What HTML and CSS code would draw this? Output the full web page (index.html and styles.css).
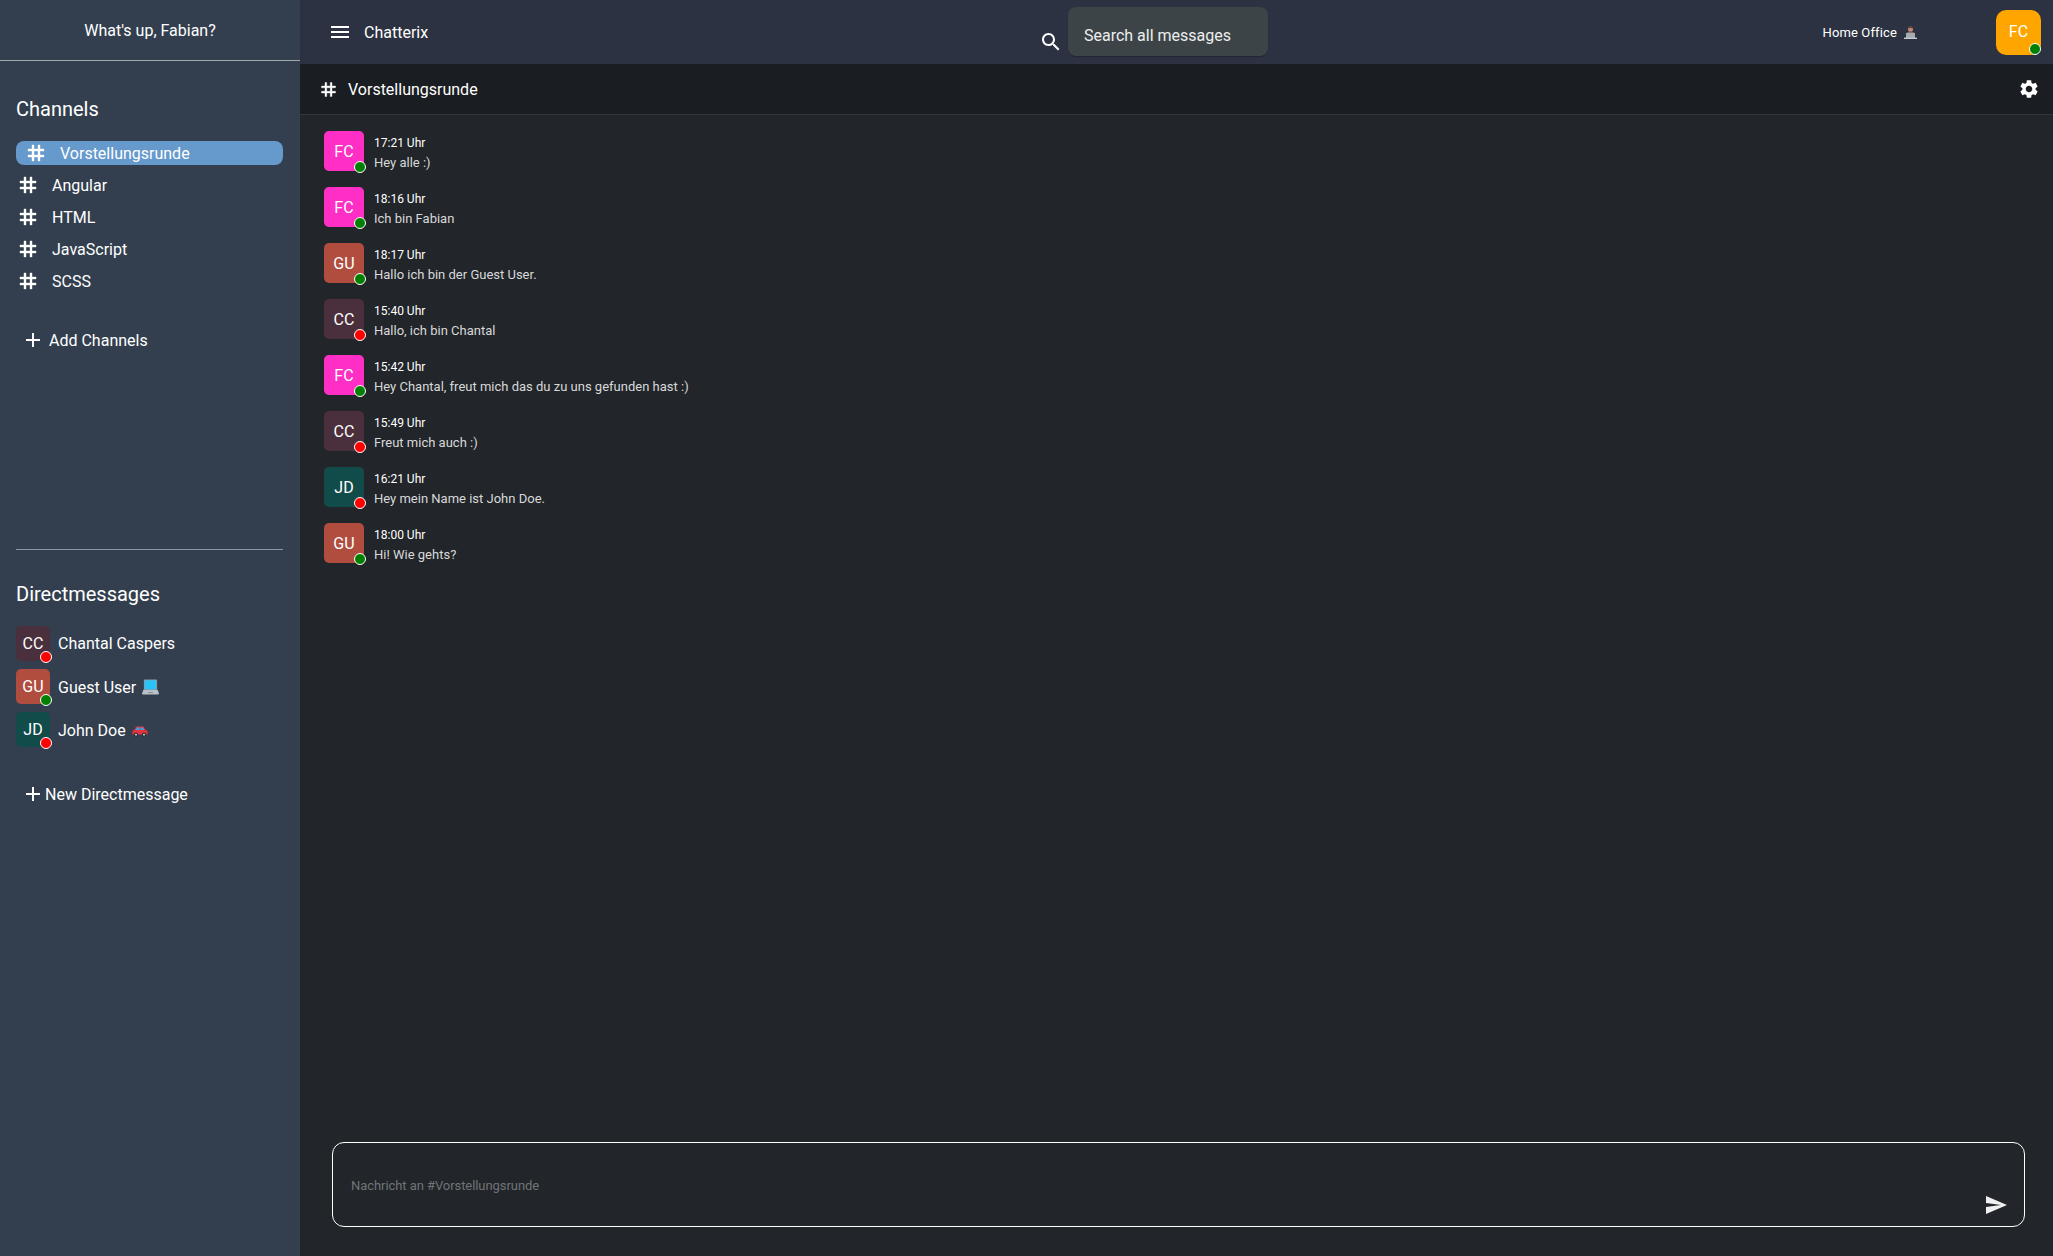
FILE: index.html
```html
<!DOCTYPE html>
<html lang="de">
<head>
<meta charset="utf-8">
<title>Chatterix</title>
<link rel="stylesheet" href="styles.css">
</head>
<body>
<svg class="defs" aria-hidden="true">
  <symbol id="i-tag" viewBox="0 0 24 24"><path d="M20 10V8h-4V4h-2v4h-4V4H8v4H4v2h4v4H4v2h4v4h2v-4h4v4h2v-4h4v-2h-4v-4h4zm-6 4h-4v-4h4v4z"/></symbol>
  <symbol id="i-add" viewBox="0 0 24 24"><path d="M19 13h-6v6h-2v-6H5v-2h6V5h2v6h6v2z"/></symbol>
  <symbol id="i-menu" viewBox="0 0 24 24"><path d="M3 18h18v-2H3v2zm0-5h18v-2H3v2zm0-7v2h18V6H3z"/></symbol>
  <symbol id="i-search" viewBox="0 0 24 24"><path d="M15.5 14h-.79l-.28-.27C15.41 12.59 16 11.11 16 9.5 16 5.91 13.09 3 9.5 3S3 5.91 3 9.5 5.91 16 9.5 16c1.61 0 3.09-.59 4.23-1.57l.27.28v.79l5 4.99L20.49 19l-4.99-5zm-6 0C7.01 14 5 11.99 5 9.5S7.01 5 9.5 5 14 7.01 14 9.5 11.99 14 9.5 14z"/></symbol>
  <symbol id="i-gear" viewBox="0 0 24 24"><path d="M19.14 12.94c.04-.3.06-.61.06-.94 0-.32-.02-.64-.07-.94l2.03-1.58c.18-.14.23-.41.12-.61l-1.92-3.32c-.12-.22-.37-.29-.59-.22l-2.39.96c-.5-.38-1.03-.7-1.62-.94l-.36-2.54c-.04-.24-.24-.41-.48-.41h-3.84c-.24 0-.43.17-.47.41l-.36 2.54c-.59.24-1.13.57-1.62.94l-2.39-.96c-.22-.08-.47 0-.59.22L2.74 8.87c-.12.21-.08.47.12.61l2.03 1.58c-.05.3-.09.63-.09.94s.02.64.07.94l-2.03 1.58c-.18.14-.23.41-.12.61l1.92 3.32c.12.22.37.29.59.22l2.39-.96c.5.38 1.03.7 1.62.94l.36 2.54c.05.24.24.41.48.41h3.84c.24 0 .44-.17.47-.41l.36-2.54c.59-.24 1.13-.56 1.62-.94l2.39.96c.22.08.47 0 .59-.22l1.92-3.32c.12-.22.07-.47-.12-.61l-2.01-1.58zM12 15.6c-1.98 0-3.6-1.62-3.6-3.6s1.62-3.6 3.6-3.6 3.6 1.62 3.6 3.6-1.62 3.6-3.6 3.6z"/></symbol>
  <symbol id="i-send" viewBox="0 0 24 24"><path d="M2.01 21L23 12 2.01 3 2 10l15 2-15 2z"/></symbol>
  <symbol id="e-laptop" viewBox="0 0 18 16"><path fill="#8d9aa3" d="M3 0h12a1 1 0 0 1 1 1v10H2V1a1 1 0 0 1 1-1z"/><path fill="#2ac4fb" d="M3 1h12v9.500H3z"/><path fill="#b9c2c8" d="M1.500 11h15l1.500 4a1 1 0 0 1-1 1H1a1 1 0 0 1-1-1z"/><path fill="#7d8890" d="M6.500 13.500h5v1h-5z"/></symbol>
  <symbol id="e-car" viewBox="0 0 16 11"><path fill="#e8323f" d="M4 .5h7.500L13.500 4l2 .8V8.500H.5V4.800L2.500 4z"/><path fill="#2fa8e8" d="M4.800 1.500h2.700V4H3.600zM8.500 1.500h2.500L12.200 4H8.500z"/><circle cx="4" cy="8.700" r="2.100" fill="#2b2f38"/><circle cx="12" cy="8.700" r="2.100" fill="#2b2f38"/><circle cx="4" cy="8.700" r=".9" fill="#e6e8ea"/><circle cx="12" cy="8.700" r=".9" fill="#e6e8ea"/></symbol>
  <symbol id="e-office" viewBox="0 0 13 13"><path fill="#8c6f68" d="M2.500 13V7.500c0-1 1.500-2 4-2s4 1 4 2V13z"/><circle cx="6.500" cy="3" r="2.600" fill="#c48a78"/><path fill="#5f4038" d="M3.900 2.800C3.900-.3 9.100-.3 9.100 2.800 7.800 1.700 5.200 1.700 3.900 2.800z"/><path fill="#a4acb2" d="M2 7h9v5H2z"/><path fill="#c4cbd0" d="M0 11.600h13V13H0z"/></symbol>
</svg>

<div class="app">
  <aside class="sidebar">
    <div class="greeting">What's up, Fabian?</div>

    <section class="channels">
      <h2 class="section-title">Channels</h2>
      <ul class="channel-list">
        <li class="channel channel-active"><svg class="icon"><use href="#i-tag"/></svg><span>Vorstellungsrunde</span></li>
        <li class="channel"><svg class="icon"><use href="#i-tag"/></svg><span>Angular</span></li>
        <li class="channel"><svg class="icon"><use href="#i-tag"/></svg><span>HTML</span></li>
        <li class="channel"><svg class="icon"><use href="#i-tag"/></svg><span>JavaScript</span></li>
        <li class="channel"><svg class="icon"><use href="#i-tag"/></svg><span>SCSS</span></li>
      </ul>
      <div class="add-row add-channel"><svg class="icon"><use href="#i-add"/></svg><span>Add Channels</span></div>
    </section>

    <section class="dms">
      <h2 class="section-title">Directmessages</h2>
      <ul class="dm-list">
        <li class="dm">
          <div class="avatar avatar-small bg-cc">CC<i class="dot dot-off"></i></div>
          <span>Chantal Caspers</span>
        </li>
        <li class="dm dm-status">
          <div class="avatar avatar-small bg-gu">GU<i class="dot dot-on"></i></div>
          <span>Guest User</span>
          <svg class="emoji emoji-laptop"><use href="#e-laptop"/></svg>
        </li>
        <li class="dm dm-status">
          <div class="avatar avatar-small bg-jd">JD<i class="dot dot-off"></i></div>
          <span>John Doe</span>
          <svg class="emoji emoji-car"><use href="#e-car"/></svg>
        </li>
      </ul>
      <div class="add-row add-dm"><svg class="icon"><use href="#i-add"/></svg><span>New Directmessage</span></div>
    </section>
  </aside>

  <div class="main">
    <header class="topbar">
      <div class="brand">
        <svg class="icon"><use href="#i-menu"/></svg>
        <span>Chatterix</span>
      </div>
      <div class="search">
        <svg class="icon search-icon"><use href="#i-search"/></svg>
        <div class="search-box">Search all messages</div>
      </div>
      <div class="profile">
        <span class="status-text">Home Office</span>
        <svg class="emoji emoji-office"><use href="#e-office"/></svg>
        <div class="avatar avatar-me bg-me">FC<i class="dot dot-on"></i></div>
      </div>
    </header>

    <div class="channel-bar">
      <svg class="icon bar-tag"><use href="#i-tag"/></svg>
      <span class="bar-title">Vorstellungsrunde</span>
      <svg class="icon bar-gear"><use href="#i-gear"/></svg>
    </div>

    <div class="messages">
      <article class="message">
        <div class="avatar avatar-msg bg-fc">FC<i class="dot dot-on"></i></div>
        <div class="msg-body"><div class="msg-time">17:21 Uhr</div><div class="msg-text">Hey alle :)</div></div>
      </article>
      <article class="message">
        <div class="avatar avatar-msg bg-fc">FC<i class="dot dot-on"></i></div>
        <div class="msg-body"><div class="msg-time">18:16 Uhr</div><div class="msg-text">Ich bin Fabian</div></div>
      </article>
      <article class="message">
        <div class="avatar avatar-msg bg-gu">GU<i class="dot dot-on"></i></div>
        <div class="msg-body"><div class="msg-time">18:17 Uhr</div><div class="msg-text">Hallo ich bin der Guest User.</div></div>
      </article>
      <article class="message">
        <div class="avatar avatar-msg bg-cc">CC<i class="dot dot-off"></i></div>
        <div class="msg-body"><div class="msg-time">15:40 Uhr</div><div class="msg-text">Hallo, ich bin Chantal</div></div>
      </article>
      <article class="message">
        <div class="avatar avatar-msg bg-fc">FC<i class="dot dot-on"></i></div>
        <div class="msg-body"><div class="msg-time">15:42 Uhr</div><div class="msg-text">Hey Chantal, freut mich das du zu uns gefunden hast :)</div></div>
      </article>
      <article class="message">
        <div class="avatar avatar-msg bg-cc">CC<i class="dot dot-off"></i></div>
        <div class="msg-body"><div class="msg-time">15:49 Uhr</div><div class="msg-text">Freut mich auch :)</div></div>
      </article>
      <article class="message">
        <div class="avatar avatar-msg bg-jd">JD<i class="dot dot-off"></i></div>
        <div class="msg-body"><div class="msg-time">16:21 Uhr</div><div class="msg-text">Hey mein Name ist John Doe.</div></div>
      </article>
      <article class="message">
        <div class="avatar avatar-msg bg-gu">GU<i class="dot dot-on"></i></div>
        <div class="msg-body"><div class="msg-time">18:00 Uhr</div><div class="msg-text">Hi! Wie gehts?</div></div>
      </article>
    </div>

    <div class="composer">
      <span class="placeholder">Nachricht an #Vorstellungsrunde</span>
      <svg class="icon send-icon"><use href="#i-send"/></svg>
    </div>
  </div>
</div>
</body>
</html>
```

FILE: styles.css
```css
* { box-sizing: border-box; }

html, body { margin: 0; padding: 0; height: 100%; }

body {
  font-family: Roboto, "Liberation Sans", sans-serif;
  font-size: 16px;
  color: #fff;
  background: #222529;
  overflow: hidden;
}

ul { list-style: none; margin: 0; padding: 0; }

.defs { display: none; }

.app {
  display: grid;
  grid-template-columns: 300px 1fr;
  height: 1256px;
}

.icon {
  display: block;
  width: 24px;
  height: 24px;
  fill: #fff;
  flex: none;
}

.channel .icon,
.bar-tag {
  stroke: #fff;
  stroke-width: .4px;
}

/* Sidebar */
.sidebar {
  background: #333f4f;
  display: flex;
  flex-direction: column;
}

.greeting {
  height: 61px;
  flex: none;
  display: flex;
  align-items: center;
  justify-content: center;
  border-bottom: 1px solid #a3a8ad;
}

.channels {
  height: 489px;
  margin: 0 17px 0 16px;
  padding-top: 36px;
  border-bottom: 1px solid #8a96a3;
  flex: none;
}

.section-title {
  margin: 0;
  font-size: 20px;
  font-weight: 400;
  line-height: 24px;
}

.channel-list {
  margin-top: 20px;
  display: flex;
  flex-direction: column;
  gap: 8px;
}

.channel {
  display: flex;
  align-items: center;
  gap: 12px;
  height: 24px;
}

.channel-active {
  background: #6699cc;
  border-radius: 8px;
  padding-left: 8px;
}

.add-row {
  display: flex;
  align-items: center;
  margin-left: 5px;
}

.add-channel {
  margin-top: 35px;
  gap: 4px;
}

.dms { padding: 32px 16px 0; }

.dm-list {
  margin-top: 20px;
  display: flex;
  flex-direction: column;
  gap: 8px;
}

.dm {
  display: flex;
  align-items: center;
  height: 35px;
}

.dm > span { margin-left: 8px; }
.dm-status > span { margin-top: 2px; }

.add-dm { margin-top: 35px; }

/* Avatars */
.avatar {
  position: relative;
  display: flex;
  align-items: center;
  justify-content: center;
  flex: none;
  border-radius: 5px;
}

.avatar-small { width: 34px; height: 35px; }
.avatar-msg { width: 40px; height: 40px; }
.avatar-me { width: 45px; height: 45px; border-radius: 10px; margin-left: 79px; padding-bottom: 1px; }

.avatar-me .dot { right: 0; bottom: 0; }

.bg-cc { background: #4a303c; }
.bg-gu { background: #b04d3f; }
.bg-jd { background: #124c4a; }
.bg-fc { background: #ff2ec4; }
.bg-me { background: #ffa500; }

.dot {
  position: absolute;
  right: -2px;
  bottom: -2px;
  width: 12px;
  height: 12px;
  border-radius: 50%;
  border: 1px solid #fff;
}

.dot-on { background: #008000; }
.dot-off { background: #ff0000; }

.emoji { display: block; flex: none; }
.emoji-laptop { width: 17px; height: 16px; margin-left: 6px; }
.emoji-car { width: 16px; height: 11px; margin-left: 6px; margin-top: 3px; }
.emoji-office { width: 13px; height: 13px; margin-left: 7px; margin-top: 1px; }

/* Main */
.main {
  display: flex;
  flex-direction: column;
  min-width: 0;
  background: #222529;
}

.topbar {
  flex: none;
  height: 64px;
  background: #2c3241;
  display: flex;
  align-items: center;
  padding: 0 12px 0 28px;
}

.brand {
  display: flex;
  align-items: center;
  gap: 12px;
  width: 711px;
}

.search {
  display: flex;
  align-items: flex-start;
  height: 64px;
  padding-top: 7px;
}

.search-icon { margin-top: 23px; margin-right: 5px; }

.search-box {
  width: 200px;
  height: 49px;
  background: #3d4447;
  border-radius: 8px;
  padding: 7px 16px 0;
  display: flex;
  align-items: center;
  color: #eceeef;
  box-shadow: 0 1px 1px rgba(0, 0, 0, .25);
}

.profile {
  display: flex;
  align-items: center;
  margin-left: auto;
}

.status-text { font-size: 13px; font-weight: 400; margin-top: 1px; letter-spacing: .01em; }

.channel-bar {
  flex: none;
  height: 51px;
  background: #1a1d21;
  border-bottom: 1px solid #33363a;
  display: flex;
  align-items: center;
  padding: 0 13px 0 18px;
}

.bar-tag { width: 21px; height: 21px; }
.bar-title { margin-left: 9px; }
.bar-gear { width: 22px; height: 22px; margin-left: auto; }

.messages {
  flex: 1;
  padding: 16px 24px 0;
  display: flex;
  flex-direction: column;
  gap: 16px;
}

.message {
  display: flex;
  gap: 10px;
  height: 40px;
}

.msg-body {
  display: flex;
  flex-direction: column;
  gap: 4px;
  font-size: 12px;
  line-height: 15px;
  padding-top: 5px;
}

.msg-text { color: #d8d9da; font-size: 13px; }

.composer {
  flex: none;
  height: 85px;
  margin: 0 28px 29px 32px;
  border: 1px solid #fff;
  border-radius: 12px;
  position: relative;
  display: flex;
  align-items: center;
  padding: 2px 18px 0;
}

.placeholder { font-size: 13px; color: #707478; letter-spacing: -.005em; }

.send-icon { position: absolute; right: 16px; bottom: 9px; fill: #f0f0f0; }
```
